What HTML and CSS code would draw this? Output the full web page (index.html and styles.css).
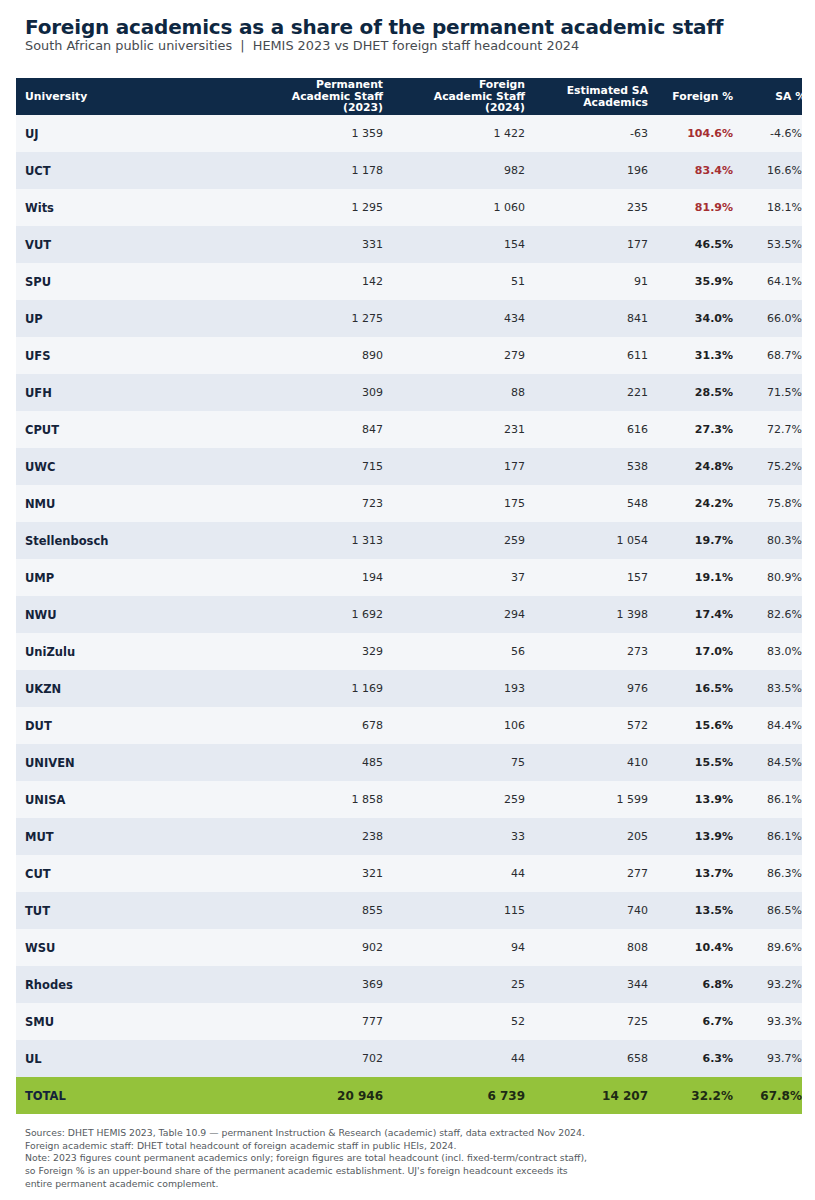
FILE: index.html
```html
<!DOCTYPE html>
<html lang="en">
<head>
<meta charset="utf-8">
<title>Foreign academics as a share of the permanent academic staff</title>
<link rel="stylesheet" href="styles.css">
</head>
<body>
<div class="page">
  <header class="head">
    <h1 class="title">Foreign academics as a share of the permanent academic staff</h1>
    <p class="subtitle">South African public universities&nbsp; | &nbsp;HEMIS 2023 vs DHET foreign staff headcount 2024</p>
  </header>
  <div class="table-wrap">
    <table class="data">
      <colgroup>
        <col class="c-uni"><col class="c-perm"><col class="c-for"><col class="c-est"><col class="c-fp"><col class="c-sp">
      </colgroup>
      <thead>
        <tr>
          <th class="left">University</th>
          <th>Permanent<br>Academic Staff<br>(2023)</th>
          <th>Foreign<br>Academic Staff<br>(2024)</th>
          <th>Estimated SA<br>Academics</th>
          <th>Foreign %</th>
          <th class="last"><span class="clip">SA %</span></th>
        </tr>
      </thead>
      <tbody>
        <tr><td class="uni">UJ</td><td>1 359</td><td>1 422</td><td>-63</td><td class="fp red">104.6%</td><td>-4.6%</td></tr>
        <tr><td class="uni">UCT</td><td>1 178</td><td>982</td><td>196</td><td class="fp red">83.4%</td><td>16.6%</td></tr>
        <tr><td class="uni">Wits</td><td>1 295</td><td>1 060</td><td>235</td><td class="fp red">81.9%</td><td>18.1%</td></tr>
        <tr><td class="uni">VUT</td><td>331</td><td>154</td><td>177</td><td class="fp">46.5%</td><td>53.5%</td></tr>
        <tr><td class="uni">SPU</td><td>142</td><td>51</td><td>91</td><td class="fp">35.9%</td><td>64.1%</td></tr>
        <tr><td class="uni">UP</td><td>1 275</td><td>434</td><td>841</td><td class="fp">34.0%</td><td>66.0%</td></tr>
        <tr><td class="uni">UFS</td><td>890</td><td>279</td><td>611</td><td class="fp">31.3%</td><td>68.7%</td></tr>
        <tr><td class="uni">UFH</td><td>309</td><td>88</td><td>221</td><td class="fp">28.5%</td><td>71.5%</td></tr>
        <tr><td class="uni">CPUT</td><td>847</td><td>231</td><td>616</td><td class="fp">27.3%</td><td>72.7%</td></tr>
        <tr><td class="uni">UWC</td><td>715</td><td>177</td><td>538</td><td class="fp">24.8%</td><td>75.2%</td></tr>
        <tr><td class="uni">NMU</td><td>723</td><td>175</td><td>548</td><td class="fp">24.2%</td><td>75.8%</td></tr>
        <tr><td class="uni">Stellenbosch</td><td>1 313</td><td>259</td><td>1 054</td><td class="fp">19.7%</td><td>80.3%</td></tr>
        <tr><td class="uni">UMP</td><td>194</td><td>37</td><td>157</td><td class="fp">19.1%</td><td>80.9%</td></tr>
        <tr><td class="uni">NWU</td><td>1 692</td><td>294</td><td>1 398</td><td class="fp">17.4%</td><td>82.6%</td></tr>
        <tr><td class="uni">UniZulu</td><td>329</td><td>56</td><td>273</td><td class="fp">17.0%</td><td>83.0%</td></tr>
        <tr><td class="uni">UKZN</td><td>1 169</td><td>193</td><td>976</td><td class="fp">16.5%</td><td>83.5%</td></tr>
        <tr><td class="uni">DUT</td><td>678</td><td>106</td><td>572</td><td class="fp">15.6%</td><td>84.4%</td></tr>
        <tr><td class="uni">UNIVEN</td><td>485</td><td>75</td><td>410</td><td class="fp">15.5%</td><td>84.5%</td></tr>
        <tr><td class="uni">UNISA</td><td>1 858</td><td>259</td><td>1 599</td><td class="fp">13.9%</td><td>86.1%</td></tr>
        <tr><td class="uni">MUT</td><td>238</td><td>33</td><td>205</td><td class="fp">13.9%</td><td>86.1%</td></tr>
        <tr><td class="uni">CUT</td><td>321</td><td>44</td><td>277</td><td class="fp">13.7%</td><td>86.3%</td></tr>
        <tr><td class="uni">TUT</td><td>855</td><td>115</td><td>740</td><td class="fp">13.5%</td><td>86.5%</td></tr>
        <tr><td class="uni">WSU</td><td>902</td><td>94</td><td>808</td><td class="fp">10.4%</td><td>89.6%</td></tr>
        <tr><td class="uni">Rhodes</td><td>369</td><td>25</td><td>344</td><td class="fp">6.8%</td><td>93.2%</td></tr>
        <tr><td class="uni">SMU</td><td>777</td><td>52</td><td>725</td><td class="fp">6.7%</td><td>93.3%</td></tr>
        <tr><td class="uni">UL</td><td>702</td><td>44</td><td>658</td><td class="fp">6.3%</td><td>93.7%</td></tr>
      </tbody>
      <tfoot>
        <tr><td class="uni">TOTAL</td><td>20 946</td><td>6 739</td><td>14 207</td><td>32.2%</td><td>67.8%</td></tr>
      </tfoot>
    </table>
  </div>
  <div class="notes">
    <p>Sources: DHET HEMIS 2023, Table 10.9 — permanent Instruction &amp; Research (academic) staff, data extracted Nov 2024.</p>
    <p>Foreign academic staff: DHET total headcount of foreign academic staff in public HEIs, 2024.</p>
    <p>Note: 2023 figures count permanent academics only; foreign figures are total headcount (incl. fixed-term/contract staff),<br>so Foreign % is an upper-bound share of the permanent academic establishment. UJ's foreign headcount exceeds its<br>entire permanent academic complement.</p>
  </div>
</div>
</body>
</html>
```

FILE: styles.css
```css
* { box-sizing: border-box; }
html, body { margin: 0; padding: 0; background: #ffffff; }
body { font-family: "DejaVu Sans", "Liberation Sans", sans-serif; color: #222; }

.page { width: 815px; padding: 15px 13px 0 16px; }

.head { padding-left: 9px; }
.title {
  margin: 0;
  font-size: 20px;
  line-height: 24px;
  letter-spacing: -0.2px;
  font-weight: 700;
  color: #0e2741;
}
.subtitle {
  margin: 0;
  font-size: 12.85px;
  line-height: 14px;
  color: #474b50;
}

.table-wrap {
  margin-top: 25px;
  width: 786px;
  overflow: hidden;
}
.data {
  width: 786px;
  border-collapse: collapse;
  table-layout: fixed;
}
.c-uni { width: 234px; }
.c-perm { width: 141px; }
.c-for { width: 142px; }
.c-est { width: 123px; }
.c-fp { width: 85px; }
.c-sp { width: 61px; }

.data th, .data td {
  height: 37px;
  padding: 0 8px 0 9px;
  text-align: right;
  white-space: nowrap;
  vertical-align: middle;
}
.data th:last-child, .data td:last-child { padding-right: 0; }
.data th.left, .data td.uni { text-align: left; }

.data thead th {
  background: #0f2a48;
  color: #ffffff;
  font-size: 10.8px;
  line-height: 11.5px;
  font-weight: 700;
}
.clip { display: inline-block; margin-right: -4px; }

.data tbody td {
  font-size: 11px;
  color: #2a2c30;
}
.data tbody tr:nth-child(odd) td { background: #f4f6f9; }
.data tbody tr:nth-child(even) td { background: #e5eaf2; }
.data td.uni { font-weight: 700; color: #14233a; font-size: 11.5px; }
.data td.fp { font-weight: 700; color: #1d1f24; }
.data td.fp.red { color: #a52e32; }

.data tfoot td {
  background: #94c23b;
  color: #1d2a14;
  font-size: 12px;
  font-weight: 700;
  height: 37px;
}

.notes {
  padding: 13px 0 0 9px;
  font-size: 9.3px;
  line-height: 12.7px;
  color: #555a60;
}
.notes p { margin: 0; }
```
